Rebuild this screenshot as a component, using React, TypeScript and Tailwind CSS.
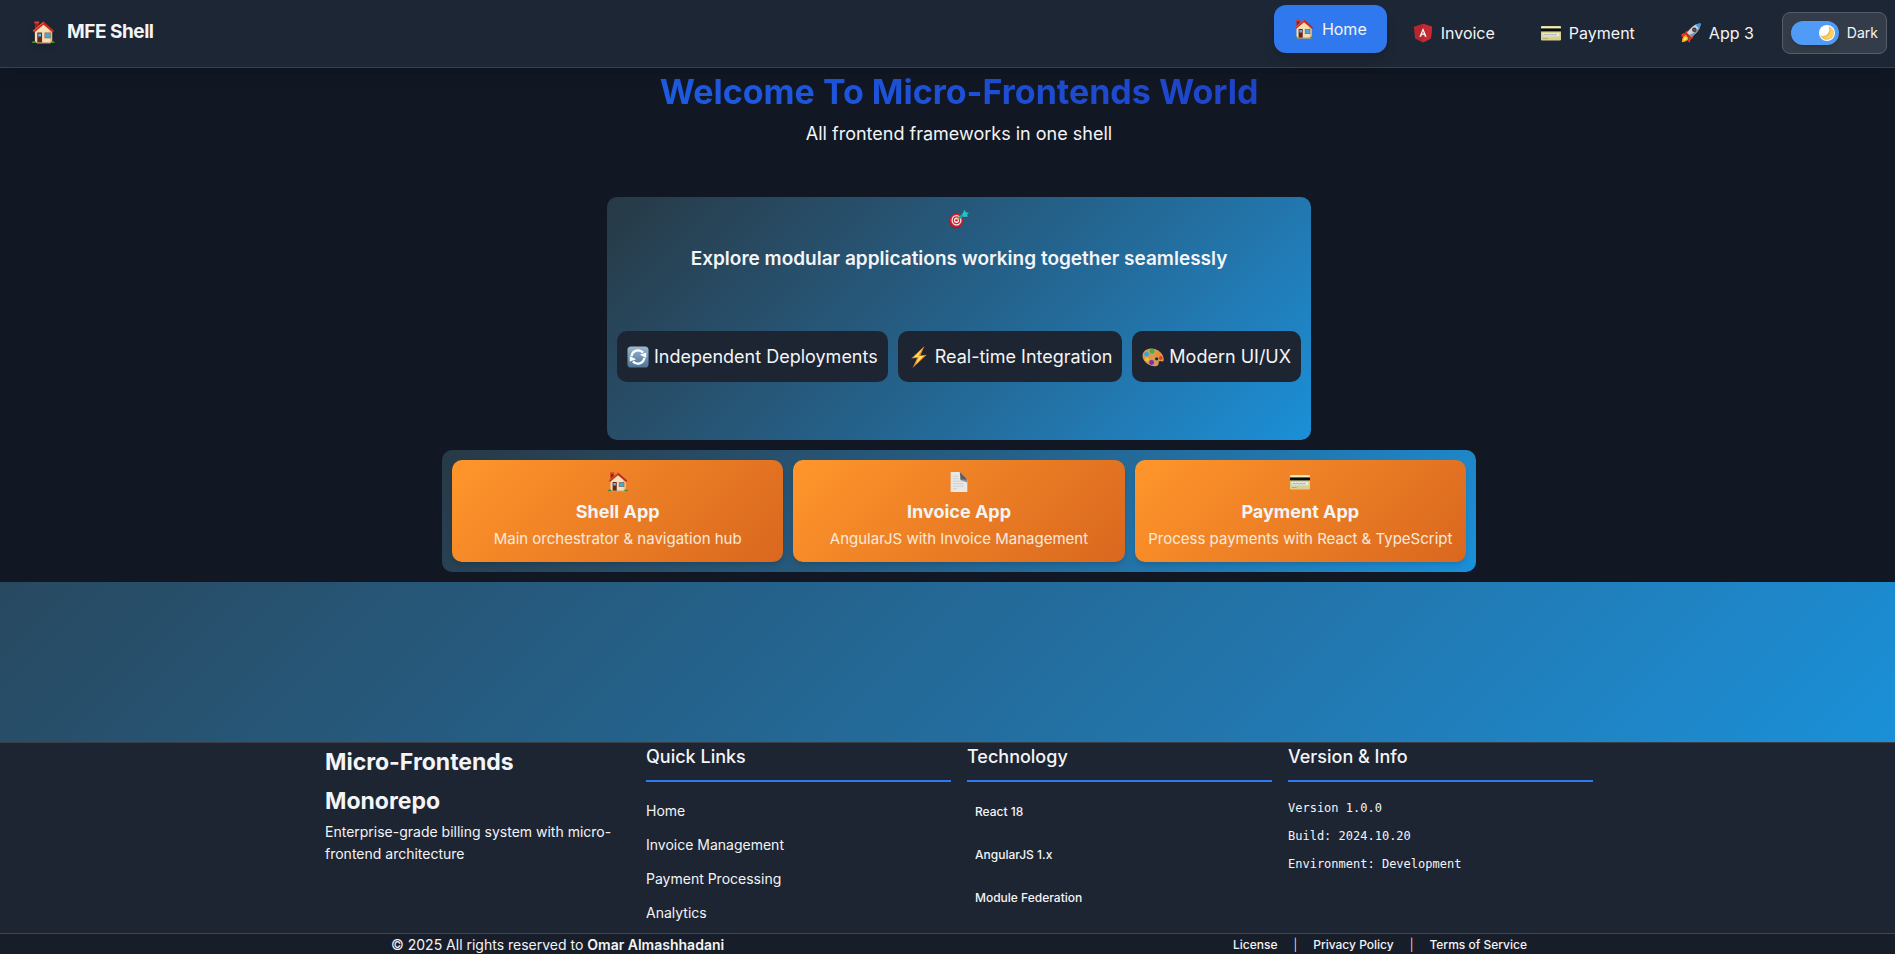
import React from 'react';

type IconProps = { className?: string };

function HouseIcon({ className = 'size-5' }: IconProps) {
  return (
    <svg viewBox="0 0 24 24" className={className} aria-hidden="true">
      <path d="M3 1h4v7H3z" fill="#a32018" />
      <path d="M2.500 .5h5v2h-5z" fill="#d8432f" />
      <path d="M3 10 12 2.500 21 10v13H3z" fill="#f6dfb4" />
      <path d="M18 8 21 10v13h-2z" fill="#dfc08c" />
      <path d="M12 .5 .8 10.200 2.400 12 12 4l9.600 8 1.600-1.800z" fill="#c32a1e" />
      <path d="M12 .5 .8 10.200l.7.700L12 2z" fill="#e5594a" />
      <path d="M5.500 12h5v11h-5z" fill="#6d2418" />
      <path d="M6.500 13.200h3v3h-3z" fill="#5ab8f0" />
      <path d="M13 12h6.500v6H13z" fill="#8d6a4a" />
      <path d="M13.700 12.700h5.100v4.600h-5.100z" fill="#4aa5e4" />
      <path d="M0 23c0-2 2-3 4-1.500L5 23zM19 23c.5-2 4-3 5 0z" fill="#4f8b2b" />
      <path d="M5 22.200h14.500V23.500H5z" fill="#b79a72" />
    </svg>
  );
}

function AngularIcon({ className = 'size-5' }: IconProps) {
  return (
    <svg viewBox="0 0 24 24" className={className} aria-hidden="true">
      <path d="M12 1 23 4.500l-1.500 14L12 23.500l-9.500-5L1 4.500z" fill="#b52730" />
      <path d="M12 1v22.500l9.500-5L23 4.500z" fill="#c62a35" />
      <path
        d="M12 6 7.700 16.500h2l.9-2.400h2.800l.9 2.400h2zm0 3.400 1 3.100h-2z"
        fill="#fff"
        fillRule="evenodd"
      />
    </svg>
  );
}

function CardIcon({ className = 'size-5' }: IconProps) {
  return (
    <svg viewBox="0 0 24 24" className={className} aria-hidden="true">
      <rect x="0" y="4" width="24" height="17" rx="1.500" fill="#d9cf8e" />
      <path d="M0 5.500C0 4.500.5 4 1.500 4h21c1 0 1.500.5 1.500 1.500V7H0z" fill="#f3ecb8" />
      <path d="M0 6.500h24v3.600H0z" fill="#0c0c0a" />
      <path d="M2 12h20v4H2z" fill="#e9edde" />
      <path d="M3 14.500l2-1 2 1 2-1 2 1 2-1 2 1 2-1 2 1" stroke="#7e9cb8" fill="none" />
      <path d="M2 18h6v1H2z" fill="#b1a768" />
    </svg>
  );
}

function RocketIcon({ className = 'size-5' }: IconProps) {
  return (
    <svg viewBox="0 0 24 24" className={className} aria-hidden="true">
      <path d="M3 14 6 9.500l5-.5-4 6zM10 21l4.500-3 .5-5-6 4z" fill="#e12a1c" />
      <path d="M23.500.5C17 1 12 4.500 7 12l5 5C19.500 12 23 7 23.500.5z" fill="#c9d4de" />
      <path d="M23.500.5C22 6 17 12 9.500 14.500L12 17C19.500 12 23 7 23.500.5z" fill="#7f93a8" />
      <path d="M23.500.5c-3 0-5 .7-6.500 1.500l5 5c1-2 1.500-4 1.500-6.500z" fill="#3d9be0" />
      <circle cx="16" cy="8" r="2.700" fill="#3b2830" />
      <circle cx="16" cy="8" r="1.500" fill="#7a5160" />
      <path d="M7 12l5 5-2 1.500L5.500 14z" fill="#c5281c" />
      <path d="M6 14.500C3 14.500 1.500 17 1 23c5-.5 8-2 8-5z" fill="#f9a51b" />
      <path d="M6 16.500c-2 .5-2.800 2-3.200 4.500 2.400-.4 4-1.200 4.400-3z" fill="#fff06a" />
      <path d="M.5 13.500 4 12l1 2-4 3zM10.500 23.500l1-5-2 .5-1.500 3z" fill="#ee3a20" />
    </svg>
  );
}

function MoonIcon({ className = 'size-4' }: IconProps) {
  return (
    <svg viewBox="0 0 24 24" className={className} aria-hidden="true">
      <path d="M14.500 2A10.300 10.300 0 1 1 2 15c7 4.500 16-3 12.500-13z" fill="#f4bd45" />
      <path d="M15.500 2.500c5 6 1 16-8.500 16.500 8 4 16-2 15.200-8.500-.4-3.600-2.700-6.500-6.700-8z" fill="#f9d56b" />
    </svg>
  );
}

function TargetIcon({ className = 'size-5' }: IconProps) {
  return (
    <svg viewBox="0 0 24 24" className={className} aria-hidden="true">
      <ellipse cx="8.500" cy="14.500" rx="8" ry="8.700" fill="#a8121f" />
      <ellipse cx="8.800" cy="13.700" rx="7.800" ry="8.200" fill="#dc1f2e" />
      <ellipse cx="9" cy="13.500" rx="5.900" ry="6.200" fill="#f5f2f2" />
      <ellipse cx="9" cy="13.500" rx="4.500" ry="4.700" fill="#dc1f2e" />
      <ellipse cx="9" cy="13.500" rx="3" ry="3.200" fill="#f5f2f2" />
      <ellipse cx="9" cy="13.500" rx="1.500" ry="1.600" fill="#dc1f2e" />
      <path d="M9.500 13 13 10" stroke="#e0a03a" strokeWidth="1.800" />
      <path d="M12 11 19 5.500" stroke="#18a5a8" strokeWidth="3" />
      <path d="M16 6.500 18.500 1l1.500 3 4 .5-2.500 2.500 1.500 2-5.500.5z" fill="#2cbfc8" />
    </svg>
  );
}

function RefreshIcon({ className = 'size-[22px]' }: IconProps) {
  return (
    <svg viewBox="0 0 24 24" className={className} aria-hidden="true">
      <defs>
        <linearGradient id="tile" x1="0" y1="0" x2="0" y2="1">
          <stop offset="0" stopColor="#9dbad0" />
          <stop offset=".5" stopColor="#6f95b5" />
          <stop offset="1" stopColor="#4f7496" />
        </linearGradient>
      </defs>
      <rect x=".5" y=".5" width="23" height="23" rx="4" fill="url(#tile)" />
      <path d="M5 11a7.200 7.200 0 0 1 12.500-3.800M19 13A7.200 7.200 0 0 1 6.500 16.800" stroke="#fff" strokeWidth="2.600" fill="none" />
      <path d="M21 7v6l-7-3.500zM3 17v-6l7 3.500z" fill="#fff" />
    </svg>
  );
}

function BoltIcon({ className = 'size-[22px]' }: IconProps) {
  return (
    <svg viewBox="0 0 24 24" className={className} aria-hidden="true">
      <path d="M18 0 3.500 13.500l6.500-.7L5 24 20.500 9.500l-7 .8z" fill="#f08a1c" />
      <path d="M16 2.500 6 12.500l6-.7-4 8.700 9.500-10-6.500.8z" fill="#ffe066" />
    </svg>
  );
}

function PaletteIcon({ className = 'size-[22px]' }: IconProps) {
  return (
    <svg viewBox="0 0 24 24" className={className} aria-hidden="true">
      <path d="M8 3C2 4-1 9 1.500 14.500 4 20 12 23.500 16.500 21.500c3-1.500.5-4 2.500-5 1.500-.7 4 1.500 4.500-.5C25 9.500 17 1.500 8 3z" fill="#d89a50" />
      <circle cx="11" cy="5.700" r="2.600" fill="#35b44a" />
      <circle cx="5" cy="9" r="2.500" fill="#2fa5e6" />
      <circle cx="5.500" cy="14.500" r="2.300" fill="#e6c52d" />
      <circle cx="10.500" cy="18" r="2.700" fill="#7b2fb5" />
      <circle cx="17.500" cy="9" r="2.300" fill="#f08a24" />
      <circle cx="20.500" cy="13" r="2" fill="#e8352c" />
      <circle cx="16" cy="14" r="1.800" fill="#1e2634" />
    </svg>
  );
}

function PageIcon({ className = 'size-5' }: IconProps) {
  return (
    <svg viewBox="0 0 24 24" className={className} aria-hidden="true">
      <path d="M2 0h11l9 9v15H2z" fill="#e8e8e8" />
      <path d="M13 0l9 9v3.500l-8.500-3z" fill="#8d8d8d" />
      <path d="M13 0l9 9h-7.500z" fill="#5c5c5c" />
      <path d="M4.500 5h7M4.500 8h7M4.500 11h13M4.500 14h13M4.500 17h13M4.500 20h5" stroke="#c9c9c9" />
    </svg>
  );
}

const navLinks = [
  { label: 'Invoice', Icon: AngularIcon },
  { label: 'Payment', Icon: CardIcon },
  { label: 'App 3', Icon: RocketIcon },
];

const features = [
  { label: 'Independent Deployments', Icon: RefreshIcon },
  { label: 'Real-time Integration', Icon: BoltIcon },
  { label: 'Modern UI/UX', Icon: PaletteIcon },
];

const apps = [
  { title: 'Shell App', text: 'Main orchestrator & navigation hub', Icon: HouseIcon },
  { title: 'Invoice App', text: 'AngularJS with Invoice Management', Icon: PageIcon },
  { title: 'Payment App', text: 'Process payments with React & TypeScript', Icon: CardIcon },
];

const quickLinks = ['Home', 'Invoice Management', 'Payment Processing', 'Analytics'];
const technologies = ['React 18', 'AngularJS 1.x', 'Module Federation'];
const versionInfo = ['Version 1.0.0', 'Build: 2024.10.20', 'Environment: Development'];
const legalLinks = ['License', 'Privacy Policy', 'Terms of Service'];

function Header() {
  return (
    <header className="relative z-10 flex h-[68px] items-center justify-between border-b border-[#3a3f48] bg-[#1d2634] pr-2 pb-0.5 pl-8 shadow-lg">
      <div className="flex items-center gap-3">
        <HouseIcon className="size-[23px] drop-shadow-md" />
        <span className="text-[19px] font-bold tracking-tight">MFE Shell</span>
      </div>
      <div className="flex items-center gap-2">
        <nav className="flex items-center gap-1.5">
          <a
            href="#home"
            className="-mt-2 flex h-12 items-center gap-2 rounded-xl bg-[#2f78ee] px-5 shadow-lg"
          >
            <HouseIcon />
            Home
          </a>
          {navLinks.map(({ label, Icon }) => (
            <a key={label} href="#app" className="flex h-12 items-center gap-2 px-5">
              <Icon />
              {label}
            </a>
          ))}
        </nav>
        <label className="flex h-[42px] cursor-pointer items-center gap-2 rounded-lg border border-[#555d68] bg-[#333c48] px-2 text-sm">
          <span className="relative flex h-6 w-12 items-center justify-end rounded-full bg-[#4f9bf5] px-1 shadow-md">
            <input type="checkbox" defaultChecked className="absolute inset-0 cursor-pointer appearance-none" />
            <span className="flex size-4 items-center justify-center rounded-full bg-white">
              <MoonIcon />
            </span>
          </span>
          Dark
        </label>
      </div>
    </header>
  );
}

function Hero() {
  return (
    <section className="flex flex-col items-center gap-[10px] bg-[#111824] pb-[10px] pl-[23px]">
      <div className="pt-1 pb-[35px] text-center">
        <h1 className="bg-linear-to-r from-[#1d5be2] to-[#1e44c8] bg-clip-text text-[34px] leading-10 font-bold text-transparent">
          Welcome To Micro-Frontends World
        </h1>
        <p className="pt-1 text-lg leading-9">All frontend frameworks in one shell</p>
      </div>
      <div className="flex flex-col items-center rounded-[10px] bg-linear-135 from-[#273945] via-[#24618a] to-[#1a90d8] px-[10px] pt-3 pb-[58px]">
        <TargetIcon />
        <h2 className="pt-3 pb-[54px] text-[19px] leading-9 font-semibold">
          Explore modular applications working together seamlessly
        </h2>
        <ul className="flex gap-[10px]">
          {features.map(({ label, Icon }) => (
            <li key={label} className="flex h-[51px] items-center gap-[5px] rounded-[10px] bg-[#1d2533] px-[10px] text-lg">
              <Icon />
              {label}
            </li>
          ))}
        </ul>
      </div>
      <div className="grid w-full max-w-[1034px] grid-cols-3 gap-[10px] rounded-[10px] bg-linear-135 from-[#273945] via-[#24618a] to-[#1a90d8] p-[10px]">
        {apps.map(({ title, text, Icon }) => (
          <article
            key={title}
            className="flex h-[102px] flex-col items-center rounded-[10px] bg-linear-135 from-[#ff962b] to-[#d9671f] px-[10px] pt-3 shadow-md"
          >
            <Icon />
            <h3 className="pt-1 text-lg leading-8 font-bold">{title}</h3>
            <p className="text-[15px] leading-[22px] text-[#f8e9dc]">{text}</p>
          </article>
        ))}
      </div>
    </section>
  );
}

function ColumnTitle({ children }: { children: React.ReactNode }) {
  return <h3 className="h-[39px] border-b-2 border-[#2f78ee] text-lg leading-7 font-medium">{children}</h3>;
}

function Footer() {
  return (
    <footer className="border-t border-[#3a3f48] bg-[#1d2533]">
      <div className="pl-[23px]">
        <div className="mx-auto grid h-[190px] max-w-[1268px] grid-cols-4 gap-4">
          <div>
            <h2 className="text-[23px] leading-[39px] font-bold">Micro-Frontends Monorepo</h2>
            <p className="text-sm leading-[22px]">Enterprise-grade billing system with micro-frontend architecture</p>
          </div>
          <div>
            <ColumnTitle>Quick Links</ColumnTitle>
            <ul className="pt-3 text-sm leading-[34px]">
              {quickLinks.map((link) => (
                <li key={link}>
                  <a href="#link">{link}</a>
                </li>
              ))}
            </ul>
          </div>
          <div>
            <ColumnTitle>Technology</ColumnTitle>
            <ul className="px-2 pt-2 text-xs leading-[43px] font-medium">
              {technologies.map((item) => (
                <li key={item}>{item}</li>
              ))}
            </ul>
          </div>
          <div>
            <ColumnTitle>Version &amp; Info</ColumnTitle>
            <ul className="pt-3 font-['DejaVu_Sans_Mono',monospace] text-xs leading-7">
              {versionInfo.map((item) => (
                <li key={item}>{item}</li>
              ))}
            </ul>
          </div>
        </div>
      </div>
      <div className="border-t border-[#3c4855] bg-[#181e29] pl-[23px]">
        <div className="mx-auto flex h-5 max-w-[1136px] items-center justify-between">
          <p className="pt-0.5 text-sm leading-[18px]">
            © 2025 All rights reserved to <strong className="font-semibold">Omar Almashhadani</strong>
          </p>
          <div className="flex items-center gap-4 pt-0.5 text-xs font-medium">
            {legalLinks.map((link, index) => (
              <React.Fragment key={link}>
                {index > 0 && <span className="font-light">|</span>}
                <a href="#legal">{link}</a>
              </React.Fragment>
            ))}
          </div>
        </div>
      </div>
    </footer>
  );
}

export default function App() {
  return (
    <div className="min-h-screen bg-[#111824] font-['Inter','Liberation_Sans',sans-serif] text-[#f3f4f6]">
      <Header />
      <main className="bg-linear-135 from-[#273945] via-[#24618a] to-[#1a90d8] pb-40">
        <Hero />
      </main>
      <Footer />
    </div>
  );
}
